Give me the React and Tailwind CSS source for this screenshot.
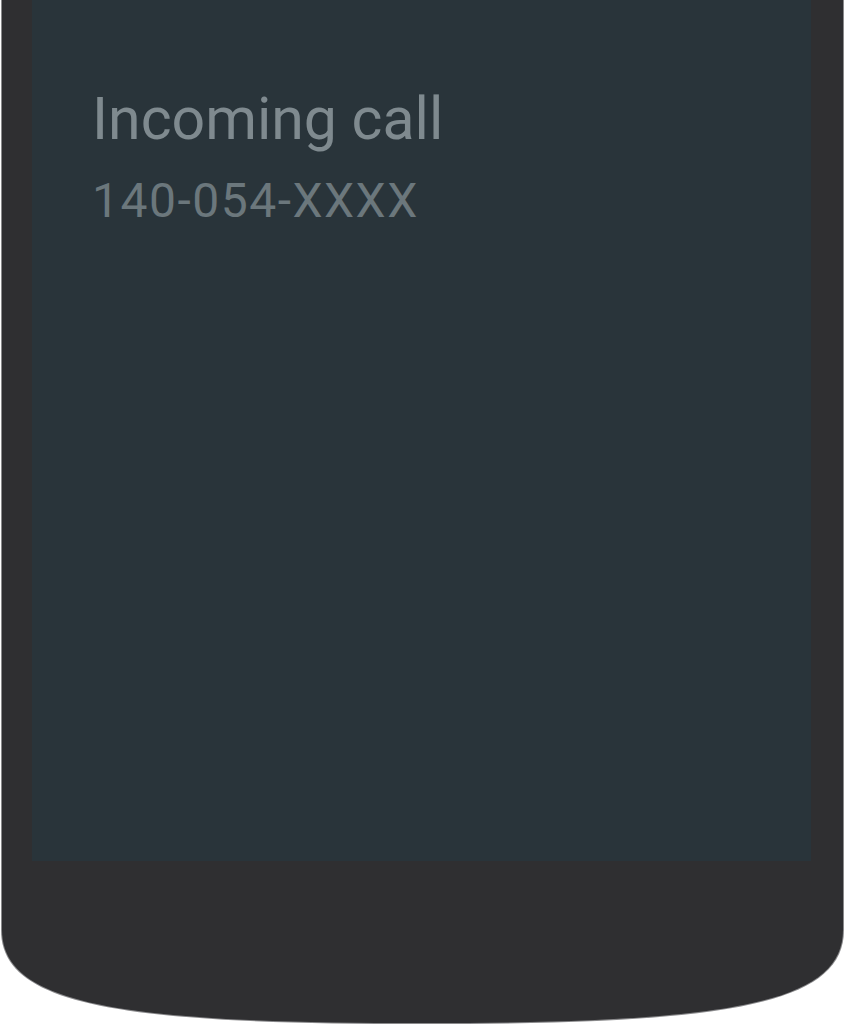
export default function App() {
  return (
    <div className="min-h-[1024px] w-[845px] overflow-hidden bg-white">
      <div className="ml-[1px] h-[1024px] w-[843px] bg-[#8a8a8c] [clip-path:path('M0_0H843V930C843_1006_722_1024_421.5_1024C121_1024_0_1006_0_930Z')]">
        <div className="ml-[1px] h-[1023px] w-[841px] bg-[#2f2f31] [clip-path:path('M0_0H841V930C841_1005_721_1023_420.5_1023C120_1023_0_1005_0_930Z')]">
          <div className="ml-[30px] h-[861px] w-[779px] bg-[#29343a] pl-[60px] pt-[89px] font-['Roboto',sans-serif]">
            <h1 className="text-[59px] leading-none font-normal text-[#7f8a8f]">
              Incoming call
            </h1>
            <p className="mt-[29px] text-[48px] leading-none tracking-[1.5px] text-[#6b777c]">
              140-054-XXXX
            </p>
          </div>
        </div>
      </div>
    </div>
  );
}
